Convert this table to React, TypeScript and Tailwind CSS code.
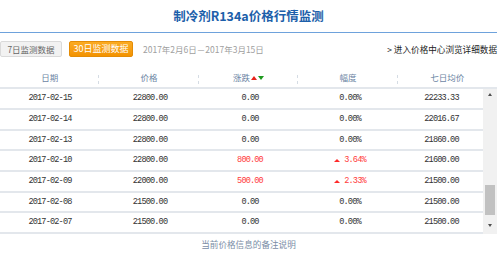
import React from "react"

const rows = [
  { date: "2017-02-15", price: "22800.00", diff: "0.00", pct: "0.00%", avg: "22233.33", up: false, h: "h-[21px]" },
  { date: "2017-02-14", price: "22800.00", diff: "0.00", pct: "0.00%", avg: "22016.67", up: false, h: "h-[21px]" },
  { date: "2017-02-13", price: "22800.00", diff: "0.00", pct: "0.00%", avg: "21860.00", up: false, h: "h-[20px]" },
  { date: "2017-02-10", price: "22800.00", diff: "800.00", pct: "3.64%", avg: "21600.00", up: true, h: "h-[21px]" },
  { date: "2017-02-09", price: "22000.00", diff: "500.00", pct: "2.33%", avg: "21500.00", up: true, h: "h-[21px]" },
  { date: "2017-02-08", price: "21500.00", diff: "0.00", pct: "0.00%", avg: "21500.00", up: false, h: "h-[20px]" },
  { date: "2017-02-07", price: "21500.00", diff: "0.00", pct: "0.00%", avg: "21500.00", up: false, h: "h-[21px]" },
]

const cjk = { fontFamily: '"Noto Sans CJK SC", "Noto Sans", sans-serif' }
const mono = { fontFamily: '"Liberation Mono", "Noto Sans CJK SC", monospace' }

function HeadCell({ children, last }: { children: React.ReactNode; last?: boolean }) {
  return (
    <div className="relative flex w-[100px] items-center justify-center">
      {children}
      {!last && <span className="absolute right-0 top-[7px] h-[9px] border-r border-dashed border-[#d5dce4]" />}
    </div>
  )
}

export default function App() {
  return (
    <div className="w-[497px] bg-white text-[#333]" style={cjk}>
      {/* title */}
      <div className="flex h-[33px] items-center justify-center border-b border-[#6ea2dc] pt-[1px]">
        <h1 className="text-[12.5px] font-bold text-[#1d5faa]">制冷剂R134a价格行情监测</h1>
      </div>

      {/* toolbar */}
      <div className="mt-[8px] flex h-[16px] items-center">
        <button className="flex h-[16px] w-[62px] items-center justify-center rounded-[2px] border border-[#dadada] bg-[#f2f2f2] text-[8.5px] text-[#666]">
          7日监测数据
        </button>
        <button className="ml-[7px] flex h-[16px] w-[64px] items-center justify-center rounded-[2px] border border-[#e48c06] bg-gradient-to-b from-[#fbab22] to-[#f39300] text-[9px] text-white">
          30日监测数据
        </button>
        <span className="ml-[10px] text-[8.5px] text-[#a0a0a0]">2017年2月6日－2017年3月15日</span>
        <span className="ml-auto text-[8.6px] text-[#222]">&gt; 进入价格中心浏览详细数据</span>
      </div>

      {/* table header */}
      <div className="mt-[2px] flex h-[30px] items-stretch border-b-2 border-[#e3e7ec] pt-[9px] text-[8.5px] text-[#6d86a4]">
        <HeadCell>日期</HeadCell>
        <HeadCell>价格</HeadCell>
        <HeadCell>
          涨跌
          <span className="ml-[1px] inline-block h-0 w-0 border-x-[3px] border-b-[4px] border-x-transparent border-b-[#e8221b]" />
          <span className="ml-[1px] inline-block h-0 w-0 border-x-[3px] border-t-[4px] border-x-transparent border-t-[#1e9a1e]" />
        </HeadCell>
        <HeadCell>幅度</HeadCell>
        <HeadCell last>七日均价</HeadCell>
      </div>

      {/* table body */}
      <div className="flex">
        <div className="flex-1 text-[8.6px] tracking-[-0.85px]" style={mono}>
          {rows.map((r) => (
            <div key={r.date} className={`flex items-center border-b-2 border-[#e3e7ec] ${r.h}`}>
              <div className="w-[100px] text-center">{r.date}</div>
              <div className="w-[100px] text-center">{r.price}</div>
              <div className={`w-[100px] text-center ${r.up ? "text-[#ff3b3b]" : ""}`}>{r.diff}</div>
              <div className={`flex w-[100px] items-center justify-center ${r.up ? "text-[#ff3b3b]" : ""}`}>
                {r.up && (
                  <span className="mr-[4px] inline-block h-0 w-0 border-x-[3px] border-b-[3px] border-x-transparent border-b-[#ff2a2a]" />
                )}
                {r.pct}
              </div>
              <div className="flex-1 text-center">{r.avg}</div>
            </div>
          ))}
        </div>
        {/* scrollbar */}
        <div className="flex w-[14px] flex-col items-center bg-[#f1f1f1] py-[4px]">
          <span className="inline-block h-0 w-0 border-x-[2.5px] border-b-[3px] border-x-transparent border-b-[#505050]" />
          <div className="mt-[89px] h-[30px] w-[10px] bg-[#c1c1c1]" />
          <span className="mt-[9px] inline-block h-0 w-0 border-x-[2.5px] border-t-[3px] border-x-transparent border-t-[#505050]" />
        </div>
      </div>

      {/* note */}
      <div className="flex h-[21px] items-center justify-center text-[8.6px] text-[#7a8da6]">当前价格信息的备注说明</div>
    </div>
  )
}
